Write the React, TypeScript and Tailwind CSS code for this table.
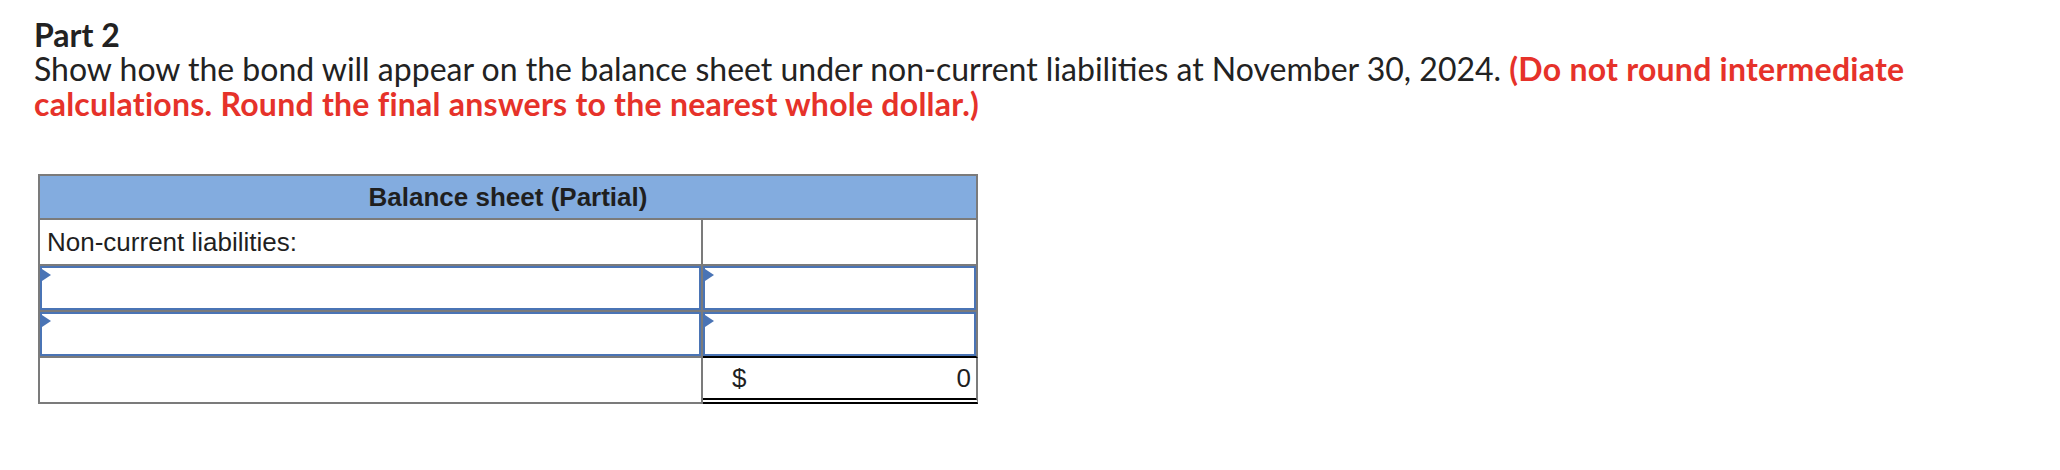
import React from "react";

function InputCell() {
  return (
    <div className="h-full border-2 border-[#4a74b5] bg-white relative">
      <span className="absolute left-0 top-[1px] w-0 h-0 border-y-[6px] border-y-transparent border-l-[9px] border-l-[#4a74b5]" />
    </div>
  );
}

export default function App() {
  return (
    <div className="w-[2060px] min-h-[470px] bg-white pt-[18px] px-[34px] font-['Lato','Open_Sans',sans-serif] text-[#222]">
      <h2 className="text-[32px] font-bold leading-[33px]">Part 2</h2>
      <p className="text-[32px] leading-[35px]">
        Show how the bond will appear on the balance sheet under non-current liabilities at November 30, 2024.{" "}
        <span className="font-bold text-[#e6322a] tracking-[0.25px]">
          (Do not round intermediate calculations. Round the final answers to the nearest whole dollar.)
        </span>
      </p>

      <div className="mt-[53px] ml-[4px] w-[940px] border-t-2 border-l-2 border-[#7b7b7b] font-['Liberation_Sans',Arial,sans-serif] text-[26px] text-[#1f1f1f]">
        {/* header */}
        <div className="h-[44px] bg-[#83acdf] border-r-2 border-b-2 border-[#7b7b7b] flex items-center justify-center font-bold">
          Balance sheet (Partial)
        </div>

        <div className="grid grid-cols-[663px_275px]">
          {/* row 1 */}
          <div className="h-[46px] border-r-2 border-b-2 border-[#7b7b7b] flex items-center pl-[7px]">
            Non-current liabilities:
          </div>
          <div className="h-[46px] border-r-2 border-b-2 border-[#7b7b7b]" />

          {/* input rows */}
          <div className="h-[46px] border-r-2 border-b-2 border-[#7b7b7b]">
            <InputCell />
          </div>
          <div className="h-[46px] border-r-2 border-b-2 border-[#7b7b7b]">
            <InputCell />
          </div>

          <div className="h-[46px] border-r-2 border-b-2 border-[#7b7b7b]">
            <InputCell />
          </div>
          <div className="h-[46px] border-r-2 border-[#7b7b7b] border-b-2 border-b-black">
            <InputCell />
          </div>

          {/* total */}
          <div className="h-[46px] border-r-2 border-b-2 border-[#7b7b7b]" />
          <div className="h-[46px] border-r-2 border-r-[#7b7b7b] border-b-[6px] border-double border-b-black flex items-center justify-between pl-[29px] pr-[5px]">
            <span>$</span>
            <span>0</span>
          </div>
        </div>
      </div>
    </div>
  );
}
